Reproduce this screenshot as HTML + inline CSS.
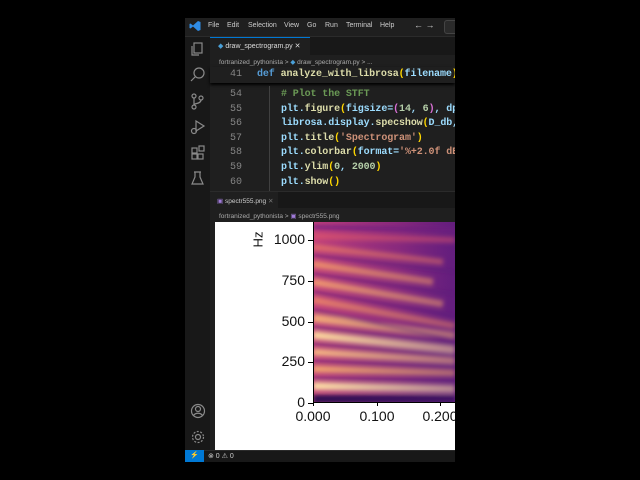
<!DOCTYPE html>
<html><head><meta charset="utf-8"><style>
*{margin:0;padding:0;box-sizing:border-box}
body{width:640px;height:480px;background:#000;position:relative;overflow:hidden;font-family:"Liberation Sans",sans-serif}
.abs{position:absolute}
.menu{font-size:7px;color:#ccc;top:22px}
.code{font-family:"Liberation Mono",monospace;font-size:10px;white-space:pre;color:#9cdcfe;font-weight:bold;letter-spacing:-0.1px}
.ln{font-family:"Liberation Mono",monospace;font-size:10px;color:#858585;width:30px;text-align:right}
.ic{stroke:#8a8a8a;fill:none;stroke-width:1.2}
.tick{font-size:14px;color:#111;text-align:right;width:50px}
.xt{font-size:14px;color:#111;width:60px;text-align:center;top:408px}
</style></head><body>
<div class="abs" style="left:185px;top:18px;width:270px;height:444px;background:#1f1f1f"></div>
<div class="abs" style="left:185px;top:18px;width:270px;height:19px;background:#1f1f1f;border-bottom:1px solid #2b2b2b"></div>
<svg class="abs" style="left:189px;top:20px" width="12" height="12" viewBox="0 0 12 12"><path d="M9 1L4 5.5 1.5 3.5 0.5 4v4l1 .5L4 6.5 9 11l2.5-1V2z" fill="#2f8ce6"/></svg>
<div class="abs menu" style="left:208px">File</div>
<div class="abs menu" style="left:227px">Edit</div>
<div class="abs menu" style="left:248px">Selection</div>
<div class="abs menu" style="left:284px">View</div>
<div class="abs menu" style="left:307px">Go</div>
<div class="abs menu" style="left:325px">Run</div>
<div class="abs menu" style="left:346px">Terminal</div>
<div class="abs menu" style="left:380px">Help</div>
<div class="abs menu" style="left:414px;top:20px;font-size:9px">←  →</div>
<div class="abs" style="left:444px;top:20px;width:14px;height:14px;border:1px solid #444;border-radius:3px;background:#2a2a2a"></div>
<div class="abs" style="left:185px;top:37px;width:25px;height:413px;background:#181818"></div>
<svg class="abs" style="left:189px;top:40px" width="18" height="150" viewBox="0 0 18 150">
<g class="ic"><rect x="5" y="3" width="8" height="10"/><path d="M3 6v9h7"/>
<circle cx="10" cy="33" r="5"/><path d="M6 37l-4 4"/>
<circle cx="5" cy="56" r="2"/><circle cx="5" cy="67" r="2"/><circle cx="12" cy="58" r="2"/><path d="M5 58v7M12 60c0 4-7 3-7 5"/>
<path d="M7 81l8 5-8 5z"/><circle cx="5" cy="91" r="2.5"/>
<rect x="3" y="108" width="5" height="5"/><rect x="3" y="114" width="5" height="5"/><rect x="9" y="114" width="5" height="5"/><rect x="10" y="106" width="5" height="5"/>
<path d="M6 132v5l-3 7h11l-3-7v-5M5 132h7"/></g></svg>
<svg class="abs" style="left:189px;top:402px" width="18" height="45" viewBox="0 0 18 45"><g class="ic"><circle cx="9" cy="9" r="6.5"/><circle cx="9" cy="7" r="2.5"/><path d="M4.5 13.5c2-3 7-3 9 0"/><circle cx="9" cy="35" r="2.5"/><circle cx="9" cy="35" r="5.5" stroke-dasharray="2 1.5"/></g></svg>
<div class="abs" style="left:210px;top:37px;width:245px;height:18px;background:#181818"></div>
<div class="abs" style="left:210px;top:37px;width:100px;height:18px;background:#1f1f1f;border-top:1px solid #0078d4"></div>
<div class="abs" style="left:218px;top:42px;font-size:7px;color:#ddd"><span style="color:#4aa0d8">◆</span> draw_spectrogram.py  ✕</div>
<div class="abs" style="left:219px;top:58px;font-size:6.5px;color:#aaa">fortranized_pythonista &gt; <span style="color:#4aa0d8">◆</span> draw_spectrogram.py &gt; ...</div>
<div class="abs" style="left:210px;top:67px;width:245px;height:16px;background:#1f1f1f;box-shadow:0 2px 3px #000"></div>
<div class="abs ln" style="left:212px;top:69px">41</div>
<div class="abs code" style="left:257px;top:69px"><span style="color:#569cd6">def</span> <span style="color:#dcdcaa">analyze_with_librosa</span><span style="color:#ffd700">(</span>filename<span style="color:#ffd700">)</span></div>
<div class="abs" style="left:269px;top:86px;width:1px;height:105px;background:#404040"></div>
<div class="abs ln" style="left:212px;top:88px;line-height:14.6px">54<br>55<br>56<br>57<br>58<br>59<br>60</div>
<div class="abs code" style="left:281px;top:88px;line-height:14.6px"><span style="color:#6a9955"># Plot the STFT</span>
plt.<span style="color:#dcdcaa">figure</span><span style="color:#ffd700">(</span>figsize=<span style="color:#da70d6">(</span><span style="color:#b5cea8">14</span>, <span style="color:#b5cea8">6</span><span style="color:#da70d6">)</span>, dp
librosa.display.<span style="color:#dcdcaa">specshow</span><span style="color:#ffd700">(</span>D_db,
plt.<span style="color:#dcdcaa">title</span><span style="color:#ffd700">(</span><span style="color:#ce9178">'Spectrogram'</span><span style="color:#ffd700">)</span>
plt.<span style="color:#dcdcaa">colorbar</span><span style="color:#ffd700">(</span>format=<span style="color:#ce9178">'%+2.0f dB</span>
plt.<span style="color:#dcdcaa">ylim</span><span style="color:#ffd700">(</span><span style="color:#b5cea8">0</span>, <span style="color:#b5cea8">2000</span><span style="color:#ffd700">)</span>
plt.<span style="color:#dcdcaa">show</span><span style="color:#ffd700">()</span></div>
<div class="abs" style="left:210px;top:191px;width:245px;height:1px;background:#2b2b2b"></div>
<div class="abs" style="left:210px;top:192px;width:245px;height:16px;background:#181818"></div>
<div class="abs" style="left:210px;top:192px;width:68px;height:16px;background:#1f1f1f"></div>
<div class="abs" style="left:217px;top:197px;font-size:6.5px;color:#ccc"><span style="color:#a07ad8">▣</span> spectr555.png  <span style="color:#777">✕</span></div>
<div class="abs" style="left:219px;top:212px;font-size:6.5px;color:#aaa">fortranized_pythonista &gt; <span style="color:#a07ad8">▣</span> spectr555.png</div>
<div class="abs" style="left:215px;top:222px;width:240px;height:228px;background:#fff"></div>
<svg class="abs" style="left:313px;top:222px" width="142" height="180" viewBox="0 0 142 180">
<defs><filter id="b" x="-10%" y="-50%" width="120%" height="200%"><feGaussianBlur stdDeviation="2.2"/></filter>
<linearGradient id="bg" x1="0" y1="0" x2="1" y2="0"><stop offset="0" stop-color="#c2407a"/><stop offset=".6" stop-color="#9a2f7e"/><stop offset="1" stop-color="#6a2080"/></linearGradient>
<linearGradient id="sh" x1="0" y1="0" x2="1" y2="0"><stop offset="0" stop-color="#5a1a7a" stop-opacity="0"/><stop offset="1" stop-color="#5a1a7a" stop-opacity=".45"/></linearGradient></defs>
<rect width="142" height="180" fill="url(#bg)"/>
<g filter="url(#b)" fill="none" stroke-linecap="butt">
<path d="M0 5L142 8" stroke="#7a2280" stroke-width="4"/>
<path d="M0 14L142 18" stroke="#d65070" stroke-width="6"/>
<path d="M0 25L130 40" stroke="#e06a6a" stroke-width="6"/>
<path d="M0 42L120 60" stroke="#ec8a6c" stroke-width="7"/>
<path d="M0 60L130 82" stroke="#ef9470" stroke-width="7"/>
<path d="M0 78L142 104" stroke="#e67c6a" stroke-width="7"/>
<path d="M0 96L142 114" stroke="#f2a878" stroke-width="8"/>
<path d="M0 113L142 128" stroke="#fcd49c" stroke-width="8"/>
<path d="M0 130L142 139" stroke="#f5b482" stroke-width="7"/>
<path d="M0 147L142 151" stroke="#f0a070" stroke-width="7"/>
<path d="M0 164L142 167" stroke="#fddaa4" stroke-width="8"/>
<path d="M0 33L142 50M0 52L142 72M0 70L142 94M0 88L142 118M0 105L142 122M0 122L142 134M0 139L142 145M0 156L142 159" stroke="#5c1a78" stroke-width="2.5" opacity=".7"/>
<path d="M0 177L142 177" stroke="#2a0a50" stroke-width="8"/>
</g>
<rect width="142" height="180" fill="url(#sh)"/>
</svg>
<div class="abs" style="left:313px;top:222px;width:1px;height:181px;background:#000"></div>
<div class="abs" style="left:313px;top:402px;width:142px;height:1px;background:#000"></div>
<div class="abs" style="left:250px;top:232px;font-size:13px;transform:rotate(-90deg);color:#111">Hz</div>
<div class="abs tick" style="left:255px;top:231px">1000</div>
<div class="abs tick" style="left:255px;top:272px">750</div>
<div class="abs tick" style="left:255px;top:313px">500</div>
<div class="abs tick" style="left:255px;top:353px">250</div>
<div class="abs tick" style="left:255px;top:394px">0</div>
<div class="abs" style="left:308px;top:240px;width:5px;height:1px;background:#000;box-shadow:0 41px #000,0 82px #000,0 122px #000,0 163px #000"></div>
<div class="abs" style="left:313px;top:402px;width:1px;height:4px;background:#000;box-shadow:64px 0 #000,127px 0 #000"></div>
<div class="abs xt" style="left:283px">0.000</div>
<div class="abs xt" style="left:347px">0.100</div>
<div class="abs xt" style="left:410px">0.200</div>
<div class="abs" style="left:455px;top:18px;width:185px;height:462px;background:#000"></div>
<div class="abs" style="left:185px;top:450px;width:270px;height:12px;background:#181818;border-top:1px solid #2b2b2b"></div>
<div class="abs" style="left:185px;top:450px;width:19px;height:12px;background:#0078d4;color:#fff;font-size:7px;text-align:center;line-height:12px">⚡</div>
<div class="abs" style="left:208px;top:452px;font-size:7px;color:#ccc">⊗ 0 ⚠ 0</div>
</body></html>
